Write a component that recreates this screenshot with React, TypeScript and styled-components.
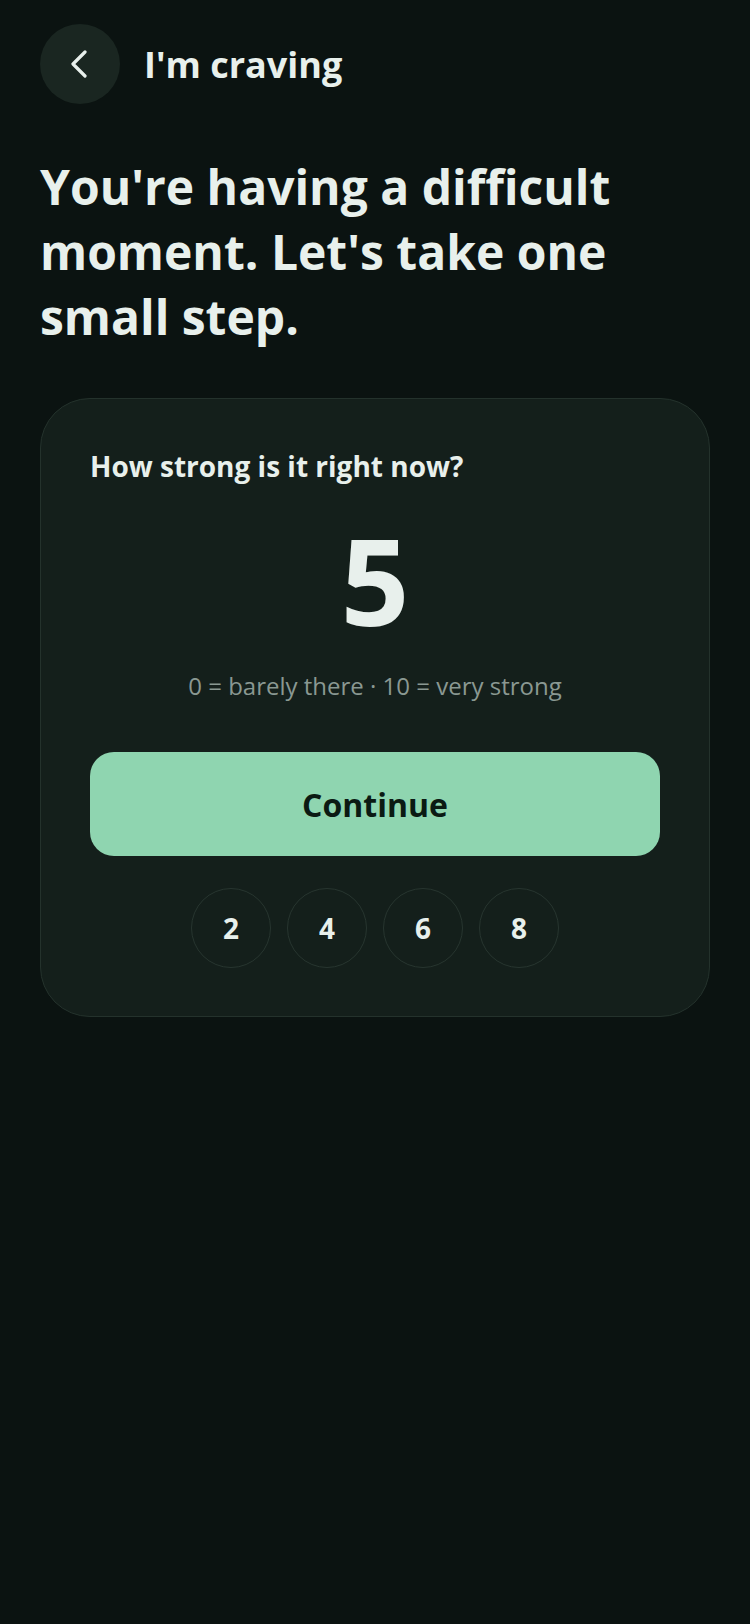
import React, { useState } from 'react'
import styled, { createGlobalStyle } from 'styled-components'

const colors = {
  bg: '#0b1311',
  card: '#141f1b',
  cardBorder: '#24322c',
  backBg: '#1a2621',
  text: '#e8f0ec',
  muted: '#8a9892',
  accent: '#8fd5b0',
  accentText: '#0b1a13',
  chipBorder: '#27352f',
}

const GlobalStyle = createGlobalStyle`
  html, body {
    margin: 0;
    padding: 0;
    background: ${colors.bg};
  }
  body {
    font-family: 'Open Sans', 'Noto Sans', sans-serif;
    color: ${colors.text};
  }
  * {
    box-sizing: border-box;
  }
`

const levels = [2, 4, 6, 8]

const App = () => {
  const [value, setValue] = useState(5)

  return (
    <>
      <GlobalStyle />
      <StyledPage>
        <StyledHeader>
          <StyledBackButton aria-label="Back">
            <svg width="16" height="28" viewBox="0 0 16 28" fill="none">
              <path
                d="M14 2 L2 14 L14 26"
                stroke={colors.text}
                strokeWidth="3.2"
                strokeLinecap="round"
                strokeLinejoin="round"
              />
            </svg>
          </StyledBackButton>
          <StyledHeaderTitle>I'm craving</StyledHeaderTitle>
        </StyledHeader>

        <StyledHeadline>
          You're having a difficult moment. Let's take one small step.
        </StyledHeadline>

        <StyledCard>
          <StyledQuestion>How strong is it right now?</StyledQuestion>
          <StyledValue>{value}</StyledValue>
          <StyledScaleHint>0 = barely there · 10 = very strong</StyledScaleHint>
          <StyledContinue>Continue</StyledContinue>
          <StyledChipRow>
            {levels.map((level) => (
              <StyledChip key={level} onClick={() => setValue(level)}>
                {level}
              </StyledChip>
            ))}
          </StyledChipRow>
        </StyledCard>
      </StyledPage>
    </>
  )
}
export default App

const StyledPage = styled.div`
  min-height: 1624px;
  padding: 24px 40px 40px;
  display: flex;
  flex-direction: column;
`
const StyledHeader = styled.div`
  display: flex;
  align-items: center;
  gap: 24px;
`
const StyledBackButton = styled.button`
  width: 80px;
  height: 80px;
  border-radius: 50%;
  border: none;
  background: ${colors.backBg};
  display: flex;
  align-items: center;
  justify-content: center;
  padding: 0 2px 0 0;
  cursor: pointer;
`
const StyledHeaderTitle = styled.h1`
  margin: 0;
  font-size: 36px;
  font-weight: 700;
  color: ${colors.text};
`
const StyledHeadline = styled.h2`
  margin: 50px 0 0;
  font-size: 48px;
  line-height: 65px;
  font-weight: 700;
  color: ${colors.text};
  padding-right: 60px;
`
const StyledCard = styled.div`
  margin-top: 49px;
  background: ${colors.card};
  border: 1px solid ${colors.cardBorder};
  border-radius: 50px;
  padding: 48px 49px;
  display: flex;
  flex-direction: column;
`
const StyledQuestion = styled.p`
  margin: 0;
  font-size: 28px;
  font-weight: 700;
  color: ${colors.text};
`
const StyledValue = styled.div`
  margin-top: 35px;
  font-size: 120px;
  line-height: 1;
  font-weight: 700;
  text-align: center;
  color: ${colors.text};
`
const StyledScaleHint = styled.p`
  margin: 29px 0 0;
  font-size: 24px;
  text-align: center;
  color: ${colors.muted};
`
const StyledContinue = styled.button`
  margin-top: 50px;
  height: 104px;
  border: none;
  border-radius: 24px;
  background: ${colors.accent};
  color: ${colors.accentText};
  font-family: 'Open Sans', sans-serif;
  font-size: 32px;
  font-weight: 700;
  cursor: pointer;
`
const StyledChipRow = styled.div`
  margin-top: 32px;
  display: flex;
  justify-content: center;
  gap: 16px;
`
const StyledChip = styled.button`
  width: 80px;
  height: 80px;
  border-radius: 50%;
  border: 1.5px solid ${colors.chipBorder};
  background: transparent;
  color: ${colors.text};
  font-family: 'Open Sans', sans-serif;
  font-size: 28px;
  font-weight: 700;
  cursor: pointer;
`
